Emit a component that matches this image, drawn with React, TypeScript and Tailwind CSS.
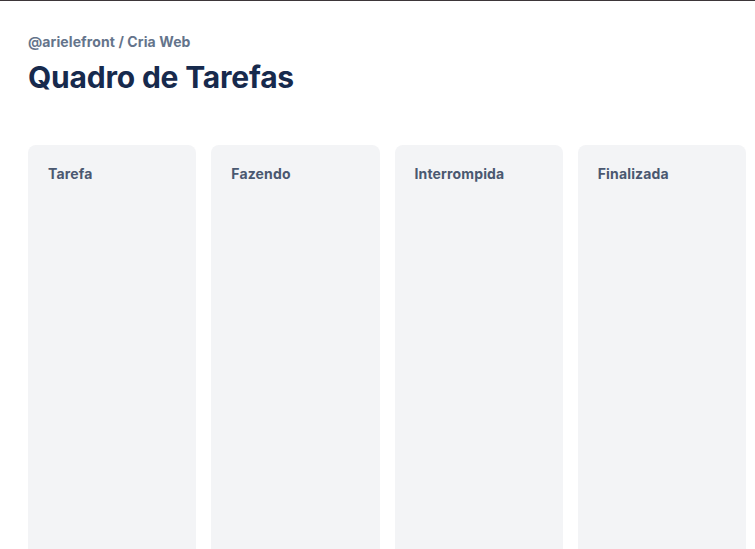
import React from "react";

const columns: string[] = ["Tarefa", "Fazendo", "Interrompida", "Finalizada"];

const App = (): JSX.Element => {
  return (
    <div
      className="min-h-screen bg-white border-t border-[#3d3639]"
      style={{ fontFamily: "Inter, 'Noto Sans', sans-serif" }}
    >
      <header className="pl-7 pr-[9px] pt-[33px]">
        <p className="text-sm font-bold leading-4 tracking-[0.1px] text-[#64748b]">
          @arielefront / Cria Web
        </p>
        <h1 className="mt-[9px] text-[30px] font-bold leading-9 tracking-[-0.2px] text-[#172a4d]">
          Quadro de Tarefas
        </h1>
      </header>
      <main className="pl-7 pr-[9px] mt-[50px]">
        <div className="grid grid-cols-4 gap-[15px]">
          {columns.map((name) => (
            <section
              key={name}
              className="h-[420px] rounded-lg bg-[#f3f4f6] px-5 pt-[19px]"
            >
              <h2 className="text-sm font-bold leading-5 tracking-[0.15px] text-[#4a5870]">
                {name}
              </h2>
            </section>
          ))}
        </div>
      </main>
    </div>
  );
};

export default App;
